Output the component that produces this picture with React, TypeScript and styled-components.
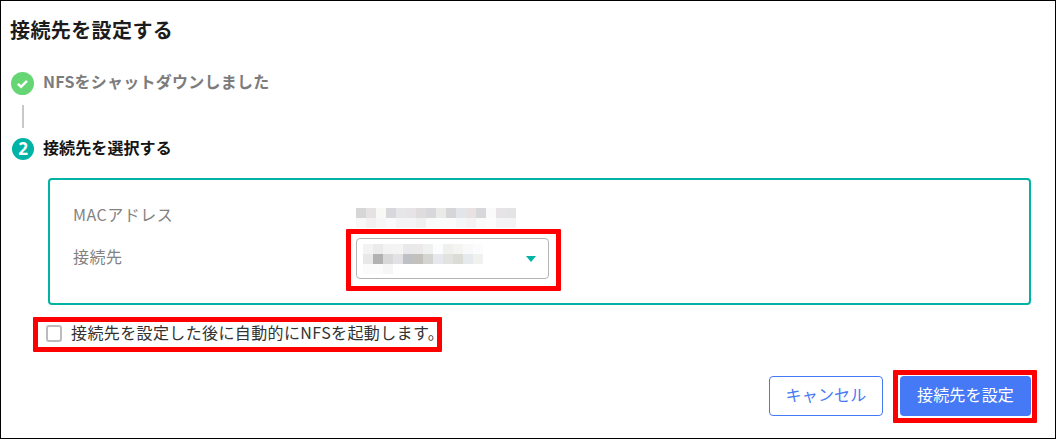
import React from "react";
import styled, { createGlobalStyle } from "styled-components";

const Global = createGlobalStyle`
  html, body { margin: 0; padding: 0; background: #fff; }
  body { font-family: "Noto Sans CJK JP", "Noto Sans", sans-serif; }
`;

const Frame = styled.div`
  box-sizing: border-box;
  width: 1056px;
  height: 439px;
  border: 1px solid #000;
  padding: 14px 24px 0 9px;
  display: flex;
  flex-direction: column;
  background: #fff;
`;
const Title = styled.h1`
  margin: 0;
  font-size: 20px;
  line-height: 30px;
  font-weight: 700;
  letter-spacing: 0.4px;
  color: #1c1c1c;
`;
const Step = styled.div<{ $top: number }>`
  display: flex;
  align-items: center;
  gap: 8px;
  margin-top: ${(p) => p.$top}px;
  height: 24px;
`;
const IconSlot = styled.span`
  width: 24px;
  height: 24px;
  margin-left: 1px;
  display: flex;
  align-items: center;
  justify-content: center;
`;
const DoneIcon = styled.svg`
  margin-right: 1px;
`;
const StepText = styled.span<{ $done?: boolean }>`
  font-size: 16px;
  font-weight: 700;
  line-height: 24px;
  margin-bottom: 4px;
  letter-spacing: ${(p) => (p.$done ? "0.25px" : "0.1px")};
  color: ${(p) => (p.$done ? "#7c7c7c" : "#141414")};
`;
const Connector = styled.div`
  width: 2px;
  height: 23px;
  margin: 10px 0 0 12px;
  background: #c8c8c8;
`;
const Panel = styled.section`
  box-sizing: border-box;
  margin: 17px 0 0 38px;
  width: 983px;
  height: 127px;
  border: 2px solid #00b3a4;
  border-radius: 4px;
  padding: 19px 23px 0;
  display: grid;
  grid-template-columns: 283px 193px;
  grid-template-rows: 30px 41px;
  row-gap: 9px;
  align-items: center;
`;
const Label = styled.span<{ $raise?: number }>`
  font-size: 16px;
  line-height: 24px;
  letter-spacing: 0.5px;
  color: #828282;
  margin-bottom: ${(p) => p.$raise ?? 0}px;
`;
const Mosaic = styled.div<{ $drop?: number }>`
  display: flex;
  flex-direction: column;
  margin-top: ${(p) => p.$drop ?? 0}px;
`;
const MosaicRow = styled.div`
  display: flex;
  height: 10px;
`;
const Cell = styled.i<{ $c: string }>`
  width: 10px;
  height: 10px;
  background: ${(p) => p.$c};
`;
const Select = styled.div`
  position: relative;
  box-sizing: border-box;
  height: 41px;
  border: 1px solid #b4b4b4;
  border-radius: 4px;
  padding: 0 12px 0 6px;
  display: flex;
  align-items: center;
  justify-content: space-between;
  &::after {
    content: "";
    position: absolute;
    inset: -10px -13px -13px -11px;
    border: 5px solid #fe0000;
    border-radius: 1px;
  }
`;
const Caret = styled.span`
  width: 0;
  height: 0;
  border-left: 5.5px solid transparent;
  border-right: 5.5px solid transparent;
  border-top: 6px solid #00b3a4;
`;
const CheckRow = styled.label`
  position: relative;
  box-sizing: border-box;
  align-self: flex-start;
  margin: 17px 0 0 28px;
  width: 399px;
  height: 25px;
  padding: 0 0 6px 8px;
  display: flex;
  align-items: center;
  gap: 9px;
  font-size: 16px;
  letter-spacing: 0.38px;
  white-space: nowrap;
  color: #333;
  &::after {
    content: "";
    position: absolute;
    inset: -5px;
    border: 5px solid #fe0000;
    border-radius: 1px;
  }
`;
const Box = styled.span`
  box-sizing: border-box;
  flex: none;
  width: 16px;
  height: 17px;
  margin-top: 3px;
  border: 2px solid #bcbcbc;
  border-radius: 3px;
  background: #fff;
`;
const Footer = styled.div`
  display: flex;
  justify-content: flex-end;
  gap: 17px;
  margin-top: 29px;
`;
const Btn = styled.button`
  box-sizing: border-box;
  height: 40px;
  border-radius: 4px;
  font: inherit;
  font-size: 16px;
  padding: 0 0 4px;
`;
const Cancel = styled(Btn)`
  width: 114px;
  background: #fff;
  border: 1px solid #4679f5;
  color: #4679f5;
  letter-spacing: 0.2px;
`;
const Primary = styled(Btn)`
  position: relative;
  width: 131px;
  background: #4679f5;
  border: none;
  color: #fff;
  letter-spacing: 0.15px;
  &::after {
    content: "";
    position: absolute;
    inset: -6px -6px -7px -7px;
    border: 5px solid #fe0000;
    border-radius: 1px;
  }
`;

const macRows = [
  ["#d6d6d6","#e4e2e2","#f8f8f5","#d8d8dc","#e6e6e8","#e6e4e6","#dedcdc","#d8d8dc","#eaeae8","#d6d6d8","#e2e6ea","#e8e2e2","#d8d8da","#fafafa","#e6e4e6","#e4e4e6"],
  ["#f8f8f8","#f2f0f0","#f6f6f6","#fafafa","#f4f4f6","#f4f4f4","#f0f0f0","#fafafa","#fafcfc","#fbfbfb","#f4f6f8","#f4f2f2","#fafafa","#fcfcfc","#f4f4f4","#f4f4f6"],
];
const selRows = [
  ["#f3f3f5","#ebebeb","#f3f3f3","#f4f4f4","#e9e9eb","#ebe9e9","#eff1f1","#fafcfe","#f0f0ee","#f4f4f2","#f9f9f9","#fbfcfe"],
  ["#e8e8e8","#b2b2b2","#d8d8d8","#e2e2e4","#bfc0c6","#c4c0bc","#d4d5d0","#e6e8ee","#e2e2e0","#dcdcd6","#e6eaec","#f0f2f0"],
  ["#fbfbfb","#fbfbfb","#f6f6f6","#ffffff","#ffffff","#ffffff","#ffffff","#ffffff","#ffffff","#ffffff","#ffffff","#ffffff"],
];

const Blur = ({ rows, drop }: { rows: string[][]; drop?: number }) => (
  <Mosaic aria-hidden $drop={drop}>
    {rows.map((r, i) => (
      <MosaicRow key={i}>
        {r.map((c, j) => (
          <Cell key={j} $c={c} />
        ))}
      </MosaicRow>
    ))}
  </Mosaic>
);

export default function App() {
  return (
    <Frame>
      <Global />
      <Title>接続先を設定する</Title>
      <Step $top={26}>
        <IconSlot>
          <DoneIcon width="23" height="23" viewBox="0 0 24 24">
            <circle cx="12" cy="12" r="12" fill="#66d573" />
            <path d="M7.2 12.3l3.3 3.1 6.2-6.2" fill="none" stroke="#fff" strokeWidth="2.6" />
          </DoneIcon>
        </IconSlot>
        <StepText $done>NFSをシャットダウンしました</StepText>
      </Step>
      <Connector />
      <Step $top={9}>
        <IconSlot>
          <svg width="22" height="22" viewBox="0 0 22 22">
            <circle cx="11" cy="11" r="11" fill="#00b3a4" />
            <text x="11" y="16.8" textAnchor="middle" fontSize="17" fontWeight="700" fill="#fff" fontFamily="Noto Sans, sans-serif">2</text>
          </svg>
        </IconSlot>
        <StepText>接続先を選択する</StepText>
      </Step>
      <Panel>
        <Label>MACアドレス</Label>
        <Blur rows={macRows} drop={8} />
        <Label $raise={5}>接続先</Label>
        <Select>
          <Blur rows={selRows} />
          <Caret />
        </Select>
      </Panel>
      <CheckRow>
        <Box />
        接続先を設定した後に自動的にNFSを起動します。
      </CheckRow>
      <Footer>
        <Cancel>キャンセル</Cancel>
        <Primary>接続先を設定</Primary>
      </Footer>
    </Frame>
  );
}
